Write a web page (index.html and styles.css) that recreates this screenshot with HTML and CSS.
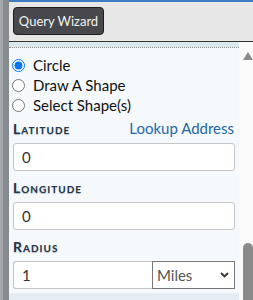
FILE: index.html
```html
<!DOCTYPE html>
<html lang="en">
<head>
  <meta charset="UTF-8">
  <title>Query Wizard</title>
  <link rel="stylesheet" href="styles.css">
</head>
<body>
  <div class="edge"></div>
  <div class="panel">
    <div class="header">
      <button class="wizard-btn">Query Wizard</button>
    </div>
    <div class="body-row">
      <div class="content">
        <div class="band"></div>
        <div class="form">
          <label class="radio"><input type="radio" name="shape" checked> Circle</label>
          <label class="radio"><input type="radio" name="shape"> Draw A Shape</label>
          <label class="radio"><input type="radio" name="shape"> Select Shape(s)</label>

          <div class="field-label first">
            <span>Latitude</span>
            <a class="link" href="#">Lookup Address</a>
          </div>
          <input class="text-input" type="text" value="0">

          <div class="field-label">
            <span>Longitude</span>
          </div>
          <input class="text-input" type="text" value="0">

          <div class="field-label">
            <span>Radius</span>
          </div>
          <div class="radius-row">
            <input class="text-input radius-input" type="text" value="1">
            <div class="select-wrap">
              <select class="unit-select">
                <option>Miles</option>
                <option>Kilometers</option>
                <option>Feet</option>
              </select>
              <svg class="chevron" width="9" height="6" viewBox="0 0 9 6">
                <path d="M1 1 L4.5 4.5 L8 1" fill="none" stroke="#333" stroke-width="1.8"/>
              </svg>
            </div>
          </div>
        </div>
        <div class="foot"></div>
      </div>
      <div class="scrollbar">
        <div class="arrow-up"></div>
        <div class="thumb"></div>
      </div>
    </div>
  </div>
</body>
</html>
```

FILE: styles.css
```css
body {
  margin: 0;
  height: 300px;
  overflow: hidden;
  display: flex;
  font-family: Lato, "Noto Sans", sans-serif;
  background-color: #fafafa;
}

.edge {
  flex-shrink: 0;
  width: 6px;
  border-left: 3px solid #a3a7ab;
  background-color: #868b8f;
}

.panel {
  flex: 1;
  min-width: 0;
  display: flex;
  flex-direction: column;
}

.header {
  height: 34px;
  padding: 5px 0 0 4px;
  background-color: #e7e7e7;
  border-top: 2px solid #3d7cc0;
  border-bottom: 1px solid #333;
}

.wizard-btn {
  height: 28px;
  width: 91px;
  padding: 0;
  background-color: #48484c;
  border: 1px solid #1e1e1e;
  border-radius: 4px;
  color: #f2f2f2;
  font-family: Lato, sans-serif;
  font-size: 13px;
  font-weight: normal;
}

.body-row {
  flex: 1;
  display: flex;
}

.content {
  flex: 1;
  min-width: 0;
  display: flex;
  flex-direction: column;
  background-color: #f5f9fc;
}

.band {
  height: 5px;
  background-color: #dbe7ee;
  border-bottom: 1px dotted #999;
}

.form {
  padding: 7px 4px 4px 4px;
}

.radio {
  display: flex;
  align-items: center;
  gap: 8px;
  height: 20px;
  font-size: 15px;
  color: #111;
}

.radio input {
  margin: 0 0 0 -1px;
  width: 13px;
  height: 13px;
}

.field-label {
  display: flex;
  justify-content: space-between;
  align-items: center;
  height: 20px;
  margin: 6px 0 5px;
  font-size: 14px;
  font-weight: bold;
  font-variant: small-caps;
  letter-spacing: 1px;
  color: #24364a;
  text-shadow: 0 1px 1px rgba(0, 0, 0, 0.25);
}

.field-label.first {
  margin-top: 3px;
}

.link {
  font-size: 15px;
  font-weight: normal;
  font-variant: normal;
  letter-spacing: 0;
  text-shadow: none;
  color: #2466a6;
  text-decoration: none;
  margin-right: 1px;
}

.text-input {
  display: block;
  box-sizing: border-box;
  width: 100%;
  height: 28px;
  padding: 0 8px;
  border: 1px solid #c6c6c6;
  border-radius: 3px;
  background-color: #fff;
  font-family: Lato, sans-serif;
  font-size: 15px;
  color: #333;
}

.radius-row {
  display: flex;
}

.radius-input {
  flex: 1;
  min-width: 0;
  width: auto;
  border-right: none;
  border-radius: 3px 0 0 3px;
}

.select-wrap {
  position: relative;
  flex-shrink: 0;
  width: 83px;
}

.unit-select {
  appearance: none;
  box-sizing: border-box;
  width: 100%;
  height: 28px;
  padding: 0 4px;
  border: 1px solid #777;
  border-radius: 0;
  background-color: #fff;
  font-family: Lato, sans-serif;
  font-size: 15px;
  color: #555;
}

.chevron {
  position: absolute;
  right: 6px;
  top: 11px;
  pointer-events: none;
}

.foot {
  flex: 1;
  background-color: #e4edf3;
}

.scrollbar {
  flex-shrink: 0;
  width: 14px;
  display: flex;
  flex-direction: column;
  justify-content: space-between;
  align-items: flex-end;
  background-color: #fafafa;
}

.arrow-up {
  width: 0;
  height: 0;
  margin: 10px 0 0;
  border-left: 5px solid transparent;
  border-right: 5px solid transparent;
  border-bottom: 8px solid #8a8a8a;
}

.thumb {
  width: 10px;
  height: 57px;
  background-color: #8a8a8a;
  border-radius: 5px 5px 0 0;
}
```
